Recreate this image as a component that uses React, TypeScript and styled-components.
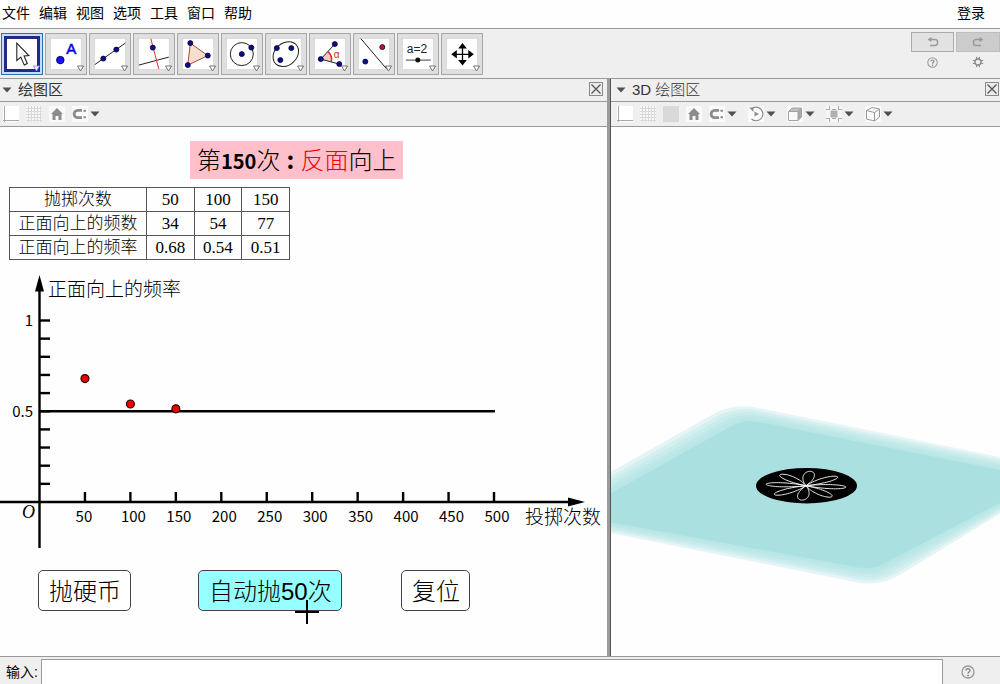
import React from "react";
import styled, { createGlobalStyle } from "styled-components";

const UI_FONT = `"Liberation Sans", "Noto Sans CJK SC", sans-serif`;
const CJK_FONT = `"Noto Sans CJK SC", sans-serif`;
const LINE = "#999999";
const FACE = "#efefef";
const PAPER = "#fefefe";

const GlobalStyle = createGlobalStyle`
  * { box-sizing: border-box; }
  body { margin: 0; background: ${PAPER}; color: #000; font-family: ${UI_FONT}; }
  button { font-family: inherit; color: inherit; padding: 0; margin: 0; cursor: pointer; }
  svg { display: block; }
`;

const Page = styled.div`
  display: flex;
  flex-direction: column;
  min-height: 100vh;
  overflow: hidden;
`;

/* ---------- menu ---------- */
const MenuBar = styled.nav`
  display: flex;
  align-items: center;
  gap: 9px;
  height: 29px;
  padding: 0 15px 4px 2px;
  border-bottom: 1px solid ${LINE};
`;
const MenuItem = styled.button<{ $end?: boolean }>`
  border: 0;
  background: none;
  font-family: ${CJK_FONT};
  font-size: 14px;
  line-height: 20px;
  margin-left: ${(p) => (p.$end ? "auto" : "0")};
`;

/* ---------- main tool bar ---------- */
const ToolBar = styled.div`
  display: flex;
  justify-content: space-between;
  height: 50px;
  padding: 3px 0 0 1px;
  background: ${FACE};
  border-bottom: 1px solid ${LINE};
`;
const ToolRow = styled.div`
  display: flex;
  gap: 2px;
  padding-top: 1px;
`;
const ToolButton = styled.button<{ $active?: boolean }>`
  width: 42px;
  height: 42px;
  border: 1px solid ${(p) => (p.$active ? "#2f6fa8" : "#a6a6a6")};
  background: ${(p) => (p.$active ? "#bfe0f8" : "#dfdfdf")};
`;
const SideTools = styled.div`
  display: grid;
  grid-template-columns: 43px 44px;
  grid-template-rows: 20px 20px;
  column-gap: 2px;
`;
const HistoryButton = styled.button<{ $off?: boolean }>`
  display: grid;
  place-items: center;
  border: 1px solid ${(p) => (p.$off ? "#bdbdbd" : "#ababab")};
  background: ${(p) => (p.$off ? "#cccccc" : "#e2e2e2")};
`;
const PlainButton = styled.button`
  display: grid;
  place-items: center;
  border: 0;
  background: none;
`;

/* ---------- views ---------- */
const Views = styled.main`
  flex: 1;
  display: grid;
  grid-template-columns: minmax(0, 607fr) 4px minmax(0, 389fr);
`;
const View = styled.section`
  display: flex;
  flex-direction: column;
  min-width: 0;
`;
const Divider = styled.div`
  background: #9b9b9b;
  border-right: 1px solid #555;
`;
const ViewHeader = styled.header`
  display: flex;
  align-items: center;
  gap: 6px;
  height: 23px;
  padding: 0 1px 0 2px;
  background: ${FACE};
  border-bottom: 1px solid ${LINE};
`;
const LeftHeader = styled(ViewHeader)`
  padding-right: 4px;
`;
const RightHeader = styled(ViewHeader)`
  padding-left: 5px;
`;
const ViewTitle = styled.h2<{ $light?: boolean }>`
  flex: 1;
  margin: 0;
  font-size: 15px;
  line-height: 20px;
  font-weight: ${(p) => (p.$light ? 300 : 400)};
  color: #333;
`;
const CloseButton = styled(PlainButton)`
  padding-bottom: 3px;
`;
const StyleBar = styled.div`
  display: flex;
  align-items: center;
  gap: 7px;
  height: 25px;
  padding: 0 0 1px 3px;
  background: ${FACE};
  border-bottom: 1px solid ${LINE};
`;
const StyleBar3D = styled(StyleBar)`
  padding-left: 6px;
`;
const StyleButton = styled.button<{ $spaced?: boolean }>`
  display: flex;
  align-items: center;
  gap: 2px;
  border: 0;
  background: none;
  margin-left: ${(p) => (p.$spaced ? "4px" : "0")};
`;

const Sheet = styled.div`
  flex: 1;
  display: flex;
  flex-direction: column;
  align-items: flex-start;
  padding-top: 14px;
  background: ${PAPER};
`;
const Result = styled.p`
  margin: 0 0 8px 190px;
  padding: 0 7px;
  height: 38px;
  background: #ffc0cb;
  font-family: ${CJK_FONT};
  font-size: 24px;
  font-weight: 300;
  line-height: 36px;
  white-space: nowrap;
`;
const Count = styled.b`
  font-size: 20px;
  font-weight: 700;
`;
const Colon = styled.b`
  display: inline-block;
  width: 20px;
  font-weight: 700;
  text-align: center;
`;
const Side = styled.span`
  color: #f00000;
`;
const DataTable = styled.table`
  margin-left: 9px;
  border-collapse: collapse;
  table-layout: fixed;
  width: 281px;
  font-family: "Liberation Serif", "Noto Sans CJK SC", serif;
  font-size: 17px;
  line-height: 22px;
  text-align: center;
  th, td {
    height: 24px;
    padding: 0;
    border: 1px solid #555;
    font-weight: 300;
    white-space: nowrap;
  }
`;
const LabelCol = styled.col`
  width: 137px;
`;
const Chart = styled.svg`
  width: 100%;
  height: auto;
`;
const AxisText = styled.text`
  font-family: ${CJK_FONT};
  font-size: 15px;
`;
const AxisTitle = styled.text`
  font-family: ${CJK_FONT};
  font-size: 19px;
  font-weight: 300;
`;
const OriginText = styled.text`
  font-family: "Liberation Serif", serif;
  font-style: italic;
  font-size: 18px;
`;
const Actions = styled.div`
  display: grid;
  grid-template-columns: 160px 203px auto;
  justify-items: start;
  padding: 0 0 45px 38px;
`;
const ActionButton = styled.button<{ $hot?: boolean }>`
  position: relative;
  height: 41px;
  padding: 2px 9px 0 10px;
  border: 1px solid #444;
  border-radius: 5px;
  background: ${(p) => (p.$hot ? "#96ffff" : "#ffffff")};
  font-size: 24px;
  font-weight: 300;
  line-height: 36px;
  white-space: nowrap;
`;
const Crosshair = styled.svg`
  position: absolute;
  left: 95px;
  top: 28px;
`;

const Scene = styled.svg`
  flex: 1;
  width: 100%;
  background: ${PAPER};
`;

/* ---------- input bar ---------- */
const InputBar = styled.form`
  display: grid;
  grid-template-columns: 41px 1fr 57px;
  height: 28px;
  padding-top: 2px;
  background: ${FACE};
  border-top: 1px solid ${LINE};
`;
const InputLabel = styled.label`
  padding-left: 6px;
  font-size: 14px;
  line-height: 26px;
`;
const CommandInput = styled.input`
  min-width: 0;
  border: 1px solid ${LINE};
  border-bottom: 0;
  background: #fff;
  font-size: 14px;
  padding: 0 4px;
  outline: 0;
`;
const HelpSlot = styled(PlainButton)`
  padding-right: 8px;
`;

/* ---------- icons ---------- */
const Dot = ({ x, y, fill = "#0d0d8c", r = 2.5 }: { x: number; y: number; fill?: string; r?: number }) => (
  <circle cx={x} cy={y} r={r} fill={fill} stroke="#000033" strokeWidth="0.8" />
);

const toolIcons: { label: string; art: React.ReactNode }[] = [
  {
    label: "移动",
    art: <path d="M15 9.5 V27 L19 23.5 L22.5 31.5 L25.5 30 L22.3 22.3 L27 22 Z" fill="#fff" stroke="#222" strokeWidth="1.1" />,
  },
  {
    label: "描点",
    art: (
      <>
        <Dot x={14.5} y={26.5} fill="#1111ff" r={3.8} />
        <text x="20.5" y="20" fontFamily="Liberation Sans, sans-serif" fontSize="15" fill="#0000dd" stroke="#0000dd" strokeWidth="0.5">A</text>
      </>
    ),
  },
  {
    label: "直线",
    art: (
      <>
        <path d="M5 31 L35.5 9.5" stroke="#222" />
        <Dot x={13.5} y={25} />
        <Dot x={26.5} y={16} />
      </>
    ),
  },
  {
    label: "垂线",
    art: (
      <>
        <path d="M5 31.5 L35 23.5" stroke="#222" />
        <path d="M17 5 L25 35.5" stroke="#dd3333" />
        <Dot x={19} y={14} />
      </>
    ),
  },
  {
    label: "多边形",
    art: (
      <>
        <path d="M12.5 9.5 L30 22 L10 31.5 Z" fill="#f5ded0" stroke="#a0522d" />
        <Dot x={12.5} y={9.5} />
        <Dot x={30} y={22} />
        <Dot x={10} y={31.5} />
      </>
    ),
  },
  {
    label: "圆",
    art: (
      <>
        <circle cx="20" cy="20.5" r="11.5" fill="none" stroke="#222" />
        <Dot x={20} y={20.5} />
        <Dot x={29.5} y={14} />
      </>
    ),
  },
  {
    label: "圆锥曲线",
    art: (
      <>
        <ellipse cx="20" cy="20.5" rx="14" ry="11" transform="rotate(-42 20 20.5)" fill="none" stroke="#222" />
        <Dot x={11} y={14.5} />
        <Dot x={25.5} y={14.5} />
        <Dot x={14.5} y={26.5} />
      </>
    ),
  },
  {
    label: "角度",
    art: (
      <>
        <path d="M11 25.5 L18 18 A10 10 0 0 1 21.5 28 Z" fill="#f8c8c8" />
        <path d="M18 18 A10 10 0 0 1 21.5 28" fill="none" stroke="#dd2222" strokeWidth="1.4" />
        <path d="M25 10.5 L11 25.5 L29.5 30.5" fill="none" stroke="#222" />
        <Dot x={25} y={10.5} />
        <Dot x={11} y={25.5} />
        <Dot x={29.5} y={30.5} />
        <text x="24" y="24" fontFamily="Liberation Sans, sans-serif" fontSize="10" fill="#dd2222">α</text>
      </>
    ),
  },
  {
    label: "对称",
    art: (
      <>
        <path d="M7 5 L33 35.5" stroke="#222" />
        <Dot x={28.5} y={13.5} fill="#cc1122" />
        <Dot x={11.5} y={28} />
      </>
    ),
  },
  {
    label: "滑动条",
    art: (
      <>
        <text x="9" y="19.5" fontFamily="Liberation Sans, sans-serif" fontSize="12" fill="#222">a=2</text>
        <path d="M8 26.5 H33" stroke="#444" />
        <circle cx="20" cy="26.5" r="2.5" fill="#111" />
      </>
    ),
  },
  {
    label: "移动视图",
    art: (
      <>
        <path d="M14 20.7 H27 M20.7 14 V27" stroke="#000" strokeWidth="1.3" />
        <path d="M20.7 9.5 L25 15 H16.4 Z M20.7 32 L25 26.5 H16.4 Z M9.5 20.7 L15 16.4 V25 Z M32 20.7 L26.5 16.4 V25 Z" fill="#000" />
      </>
    ),
  },
];

const ToolArt = ({ active, children }: { active: boolean; children: React.ReactNode }) => (
  <svg width="40" height="40" viewBox="1 1 40 40" fill="none" aria-hidden="true">
    {active && <rect x="3" y="3" width="36" height="36" fill="#26268f" />}
    <rect x="6" y="6" width="30" height="30" fill="#fff" />
    {!active && <rect x="5.5" y="5.5" width="31" height="31" fill="#fff" stroke="#cfcfcf" strokeWidth="0.6" />}
    <g transform="translate(0.8 0.6)">{children}</g>
    <path d="M32.5 33 H38.5 L35.5 38 Z" fill="#fff" stroke={active ? "#8a8ad0" : "#666"} strokeWidth="0.9" />
  </svg>
);

const Caret = () => (
  <svg width="10" height="6" viewBox="0 0 10 6" aria-hidden="true">
    <path d="M0.5 0.5 H9.5 L5 5.5 Z" fill="#505050" />
  </svg>
);

const CloseIcon = () => (
  <svg width="14" height="14" viewBox="0 0 14 14" aria-hidden="true">
    <rect x="0.5" y="0.5" width="13" height="13" fill="#ececec" stroke="#8a8a8a" />
    <path d="M2.5 2.5 L11.5 11.5 M11.5 2.5 L2.5 11.5" stroke="#555" strokeWidth="1.3" />
  </svg>
);

const HelpIcon = ({ size }: { size: number }) => (
  <svg width={size} height={size} viewBox="0 0 14 14" aria-hidden="true">
    <circle cx="7" cy="7" r="6" fill="none" stroke="#999" strokeWidth="1.3" />
    <path d="M5 5.6 C5 3.2 9 3.2 9 5.5 C9 7 7 6.9 7 8.6" fill="none" stroke="#888" strokeWidth="1.4" />
    <circle cx="7" cy="10.5" r="0.9" fill="#888" />
  </svg>
);

const GearIcon = () => (
  <svg width="12" height="12" viewBox="0 0 12 12" aria-hidden="true" fill="none" stroke="#888">
    <circle cx="6" cy="6" r="3" strokeWidth="1.3" />
    <path d="M4.9 3 L4.5 0.8 M7.1 3 L7.5 0.8 M4.9 9 L4.5 11.2 M7.1 9 L7.5 11.2 M3 4.9 L0.8 4.2 M3 7.1 L0.8 7.8 M9 4.9 L11.2 4.2 M9 7.1 L11.2 7.8" strokeWidth="1.1" />
  </svg>
);

const TurnIcon = ({ flip }: { flip?: boolean }) => (
  <svg width="12" height="10" viewBox="0 0 12 10" aria-hidden="true">
    <g transform={flip ? "translate(12 0) scale(-1 1)" : undefined}>
      <path d="M3 2.5 H8 C11.5 2.5 11.5 8.5 8 8.5 H3" fill="none" stroke="#999" strokeWidth="1.4" />
      <path d="M0.5 2.5 L4.5 0 V5 Z" fill="#999" />
    </g>
  </svg>
);

const styleArt = {
  axes: (
    <>
      <rect width="16" height="16" fill="#fff" />
      <path d="M1.5 0 V16 M0 14.5 H16" stroke="#a8a8a8" />
    </>
  ),
  grid: (
    <>
      <rect width="16" height="16" fill="#f8f8f8" />
      <path d="M2.5 0 V16 M5.5 0 V16 M8.5 0 V16 M11.5 0 V16 M14.5 0 V16 M0 2.5 H16 M0 5.5 H16 M0 8.5 H16 M0 11.5 H16 M0 14.5 H16" stroke="#d8d8d8" />
    </>
  ),
  plane: <rect width="16" height="16" fill="#d9d9d9" />,
  home: (
    <>
      <rect width="16" height="16" fill="#fafafa" />
      <path d="M8 2 L14 8 H12.5 V14 H9.5 V10 H6.5 V14 H3.5 V8 H2 Z" fill="#8c8c8c" />
    </>
  ),
  magnet: (
    <>
      <rect width="16" height="16" fill="#fafafa" />
      <path d="M10 4.3 H6 C0.8 4.3 0.8 11.7 6 11.7 H10" fill="none" stroke="#8c8c8c" strokeWidth="2.8" />
      <path d="M11.5 4.8 H14 M11.5 11.2 H14" stroke="#8c8c8c" strokeWidth="2" />
    </>
  ),
  rotate: (
    <>
      <rect width="16" height="16" fill="#fafafa" />
      <path d="M4 2.5 A6.8 6.8 0 1 1 3.5 13" fill="none" stroke="#8c8c8c" strokeWidth="1.2" />
      <path d="M1 1.5 H5.5 V6 M6.5 5.5 L11 8 L6.5 10.5 Z" fill="#8c8c8c" />
    </>
  ),
  cube: (
    <>
      <rect width="16" height="16" fill="#fafafa" />
      <path d="M1.5 5.5 L5 2 H14.5 L11 5.5 Z" fill="#c0c0c0" />
      <path d="M11 5.5 L14.5 2 V11 L11 14.5 Z" fill="#a8a8a8" />
      <path d="M1.5 5.5 H11 V14.5 H1.5 Z M1.5 5.5 L5 2 H14.5 V11 L11 14.5 M11 5.5 L14.5 2" fill="none" stroke="#a2a2a2" />
    </>
  ),
  clip: (
    <>
      <rect width="16" height="16" fill="#f6f6f6" />
      <rect x="4.5" y="4.5" width="7" height="7" fill="#b0b0b0" />
      <path d="M0 3.5 H4 M12 3.5 H16 M0 12.5 H4 M12 12.5 H16 M3.5 0 V4 M12.5 0 V4 M3.5 12 V16 M12.5 12 V16 M6 3.5 H10 M6 12.5 H10" stroke="#aaa" />
    </>
  ),
  box: (
    <>
      <rect width="16" height="16" fill="#fafafa" />
      <path d="M1.5 4.5 L7 1.5 L14.5 3 V11 L9.5 15 L1.5 13 Z M1.5 4.5 L9.5 6.5 L14.5 3 M9.5 6.5 V15" fill="none" stroke="#999" />
    </>
  ),
};

const StyleTool = ({ kind, label, menu, spaced }: { kind: keyof typeof styleArt; label: string; menu?: boolean; spaced?: boolean }) => (
  <StyleButton type="button" aria-label={label} $spaced={spaced}>
    <svg width="16" height="16" viewBox="0 0 16 16" aria-hidden="true">{styleArt[kind]}</svg>
    {menu && <Caret />}
  </StyleButton>
);

/* ---------- data ---------- */
const trials = [
  { tosses: 50, heads: 34, rate: 0.68 },
  { tosses: 100, heads: 54, rate: 0.54 },
  { tosses: 150, heads: 77, rate: 0.51 },
];
const X0 = 39.5;
const Y0 = 502;
const xAt = (n: number) => X0 + n * 0.909;
const yAt = (f: number) => Y0 - f * 181.5;

const FrequencyChart = () => (
  <Chart viewBox="0 260 607 310" role="img" aria-label="正面向上的频率">
    <g stroke="#000" strokeWidth="2.4" fill="none">
      <path d={`M0 ${Y0} H572 M${X0} 548 V286`} />
      <path d={`M${X0} ${yAt(0.5)} H495`} />
      {Array.from({ length: 10 }, (_, i) => (
        <path key={i} d={`M${X0} ${yAt((i + 1) / 10)} h10.5`} />
      ))}
      {Array.from({ length: 10 }, (_, i) => (
        <path key={i} d={`M${xAt((i + 1) * 50)} ${Y0} v-10`} />
      ))}
    </g>
    <path d="M39.5 275 L44 291.5 H35 Z M585 502 L568 497.5 V506.5 Z" />
    {trials.map((t) => (
      <circle key={t.tosses} cx={xAt(t.tosses)} cy={yAt(t.heads / t.tosses)} r="4" fill="#ee0000" stroke="#200" strokeWidth="1.1" />
    ))}
    {Array.from({ length: 10 }, (_, i) => (
      <AxisText key={i} x={xAt((i + 1) * 50) + (i ? 3 : -1)} y="522" textAnchor="middle">
        {(i + 1) * 50}
      </AxisText>
    ))}
    <AxisText x="33" y="326" textAnchor="end">1</AxisText>
    <AxisText x="33" y="417" textAnchor="end">0.5</AxisText>
    <OriginText x="22" y="518">O</OriginText>
    <AxisTitle x="48" y="296">正面向上的频率</AxisTitle>
    <AxisTitle x="525" y="524">投掷次数</AxisTitle>
  </Chart>
);

/* The plane fades out between an outer and an inner quadrilateral. */
const outerPlane = [[531, 517], [733, 403], [1070, 471], [880, 587]];
const innerPlane = [[572, 515], [744, 419], [1045, 479], [872, 570]];
const planeSteps = [0, 0.2, 0.4, 0.6, 0.8, 1];
const roundedQuad = (pts: number[][], cut: number) =>
  pts
    .map(([x, y], i) => {
      const toward = ([tx, ty]: number[]) => {
        const d = Math.hypot(tx - x, ty - y);
        return `${(x + ((tx - x) * cut) / d).toFixed(1)} ${(y + ((ty - y) * cut) / d).toFixed(1)}`;
      };
      return `${i ? "L" : "M"}${toward(pts[(i + 3) % 4])} Q${x} ${y} ${toward(pts[(i + 1) % 4])}`;
    })
    .join(" ") + " Z";
const rose = Array.from({ length: 361 }, (_, i) => {
  const a = (i * Math.PI) / 180;
  const r = Math.cos(4 * a);
  const b = a + 0.105;
  return `${(806 + 40 * r * Math.cos(b)).toFixed(1)},${(485.7 + 14.5 * r * Math.sin(b)).toFixed(1)}`;
}).join(" ");

const CoinScene = () => (
  <Scene viewBox="611 127 389 529" preserveAspectRatio="xMidYMid slice" role="img" aria-label="硬币">
    {planeSteps.map((t) => (
      <path
        key={t}
        d={roundedQuad(
          outerPlane.map(([x, y], i) => [x + (innerPlane[i][0] - x) * t, y + (innerPlane[i][1] - y) * t]),
          24 - 10 * t
        )}
        fill="#abe0e0"
        fillOpacity={t === 1 ? 1 : 0.3}
      />
    ))}
    <ellipse cx="806.5" cy="485.7" rx="50.5" ry="17.7" />
    <polyline points={rose} fill="none" stroke="#fff" strokeWidth="0.9" />
  </Scene>
);

export default function App() {
  return (
    <Page>
      <GlobalStyle />
      <MenuBar>
        {["文件", "编辑", "视图", "选项", "工具", "窗口", "帮助"].map((m) => (
          <MenuItem key={m} type="button">{m}</MenuItem>
        ))}
        <MenuItem type="button" $end>登录</MenuItem>
      </MenuBar>
      <ToolBar>
        <ToolRow>
          {toolIcons.map((t, i) => (
            <ToolButton key={t.label} type="button" aria-label={t.label} $active={i === 0}>
              <ToolArt active={i === 0}>{t.art}</ToolArt>
            </ToolButton>
          ))}
        </ToolRow>
        <SideTools>
          <HistoryButton type="button" aria-label="撤销"><TurnIcon /></HistoryButton>
          <HistoryButton type="button" aria-label="重做" $off><TurnIcon flip /></HistoryButton>
          <PlainButton type="button" aria-label="帮助"><HelpIcon size={11} /></PlainButton>
          <PlainButton type="button" aria-label="设置"><GearIcon /></PlainButton>
        </SideTools>
      </ToolBar>
      <Views>
        <View>
          <LeftHeader>
            <Caret />
            <ViewTitle>绘图区</ViewTitle>
            <CloseButton type="button" aria-label="关闭"><CloseIcon /></CloseButton>
          </LeftHeader>
          <StyleBar>
            <StyleTool kind="axes" label="坐标轴" />
            <StyleTool kind="grid" label="网格" />
            <StyleTool kind="home" label="标准视图" />
            <StyleTool kind="magnet" label="吸附" menu />
          </StyleBar>
          <Sheet>
            <Result>第<Count>150</Count>次<Colon>:</Colon><Side>反面</Side>向上</Result>
            <DataTable>
              <colgroup><LabelCol /><col /><col /><col /></colgroup>
              <tbody>
                <tr><th scope="row">抛掷次数</th>{trials.map((t) => <td key={t.tosses}>{t.tosses}</td>)}</tr>
                <tr><th scope="row">正面向上的频数</th>{trials.map((t) => <td key={t.tosses}>{t.heads}</td>)}</tr>
                <tr><th scope="row">正面向上的频率</th>{trials.map((t) => <td key={t.tosses}>{t.rate}</td>)}</tr>
              </tbody>
            </DataTable>
            <FrequencyChart />
            <Actions>
              <ActionButton type="button">抛硬币</ActionButton>
              <ActionButton type="button" $hot>
                自动抛50次
                <Crosshair width="26" height="26" viewBox="0 0 26 26" aria-hidden="true">
                  <path d="M1 13 H25 M13 1 V25" stroke="#000" strokeWidth="2" />
                </Crosshair>
              </ActionButton>
              <ActionButton type="button">复位</ActionButton>
            </Actions>
          </Sheet>
        </View>
        <Divider />
        <View>
          <RightHeader>
            <Caret />
            <ViewTitle $light>3D 绘图区</ViewTitle>
            <CloseButton type="button" aria-label="关闭"><CloseIcon /></CloseButton>
          </RightHeader>
          <StyleBar3D>
            <StyleTool kind="axes" label="坐标轴" />
            <StyleTool kind="grid" label="网格" />
            <StyleTool kind="plane" label="平面" />
            <StyleTool kind="home" label="标准视图" />
            <StyleTool kind="magnet" label="吸附" menu />
            <StyleTool kind="rotate" label="旋转" menu spaced />
            <StyleTool kind="cube" label="视角" menu spaced />
            <StyleTool kind="clip" label="裁剪" menu spaced />
            <StyleTool kind="box" label="投影" menu spaced />
          </StyleBar3D>
          <CoinScene />
        </View>
      </Views>
      <InputBar onSubmit={(e) => e.preventDefault()}>
        <InputLabel htmlFor="command">输入:</InputLabel>
        <CommandInput id="command" type="text" />
        <HelpSlot type="button" aria-label="输入帮助"><HelpIcon size={14} /></HelpSlot>
      </InputBar>
    </Page>
  );
}
